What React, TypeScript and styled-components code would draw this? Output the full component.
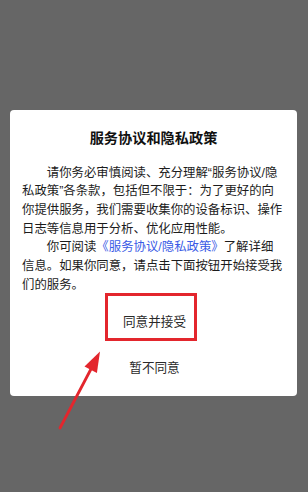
import React from "react";
import styled, { createGlobalStyle } from "styled-components";

const Global = createGlobalStyle`
  html, body {
    margin: 0;
    padding: 0;
    background: #666666;
  }
  body {
    font-family: "Liberation Sans", "Noto Sans CJK SC", sans-serif;
  }
`;

const Page = styled.div`
  position: relative;
  width: 308px;
  height: 492px;
  box-sizing: border-box;
  padding: 110px 11px 0 10px;
  background: #666666;
  overflow: hidden;
`;

const Card = styled.div`
  background: #ffffff;
  border-radius: 4px;
  padding: 0 12px 10px 12px;
  display: flex;
  flex-direction: column;
`;

const Title = styled.h1`
  margin: 18px 0 0 0;
  font-size: 14.2px;
  line-height: 20px;
  font-weight: 700;
  color: #111111;
  text-align: center;
`;

const Body = styled.div`
  margin-top: 15.7px;
  font-size: 12.4px;
  line-height: 18.67px;
  color: #1c1c1c;
`;

const Para = styled.p`
  margin: 0;
  text-indent: 2em;
  white-space: nowrap;
`;

const Link = styled.span`
  color: #3a5be6;
`;

const ActionRow = styled.div<{ $first?: boolean }>`
  position: relative;
  height: 40px;
  margin-top: ${(p) => (p.$first ? "5.7px" : "6px")};
  display: flex;
  align-items: center;
  justify-content: center;
  font-size: 12.6px;
  color: #2a2a2a;
  padding-left: 2px;
`;

const Highlight = styled.div`
  position: absolute;
  left: 82.5px;
  top: -7.3px;
  width: 92.5px;
  height: 48px;
  box-sizing: border-box;
  border: 3px solid #e3262d;
  pointer-events: none;
`;

const ArrowLayer = styled.svg`
  position: absolute;
  left: 0;
  top: 0;
  pointer-events: none;
`;

export default function App() {
  return (
    <>
      <Global />
      <Page>
        <Card>
          <Title>服务协议和隐私政策</Title>
          <Body>
            <Para>
              请你务必审慎阅读、充分理解“服务协议/隐
              <br />
              私政策”各条款，包括但不限于：为了更好的向
              <br />
              你提供服务，我们需要收集你的设备标识、操作
              <br />
              日志等信息用于分析、优化应用性能。
            </Para>
            <Para>
              你可阅读<Link>《服务协议/隐私政策》</Link>了解详细
              <br />
              信息。如果你同意，请点击下面按钮开始接受我
              <br />
              们的服务。
            </Para>
          </Body>
          <ActionRow $first>
            同意并接受
            <Highlight />
          </ActionRow>
          <ActionRow>暂不同意</ActionRow>
        </Card>
        <ArrowLayer width="308" height="492" viewBox="0 0 308 492">
          <line
            x1="60"
            y1="428"
            x2="91"
            y2="369"
            stroke="#e3262d"
            strokeWidth="2.8"
            strokeLinecap="round"
          />
          <polygon points="100,351.5 84.5,366.4 96.9,373" fill="#e3262d" />
        </ArrowLayer>
      </Page>
    </>
  );
}
